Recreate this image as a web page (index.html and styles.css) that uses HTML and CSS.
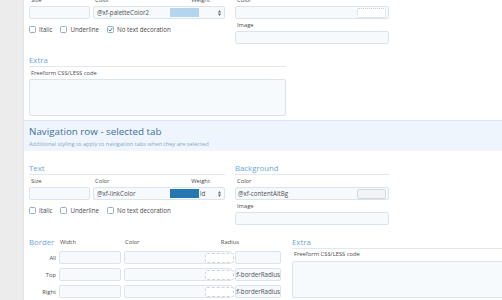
FILE: index.html
```html
<!DOCTYPE html>
<html lang="en">
<head>
    <meta charset="UTF-8">
    <title>Style properties</title>
    <link rel="stylesheet" href="styles.css">
</head>
<body>
<div class="page">
    <div class="side"></div>
    <div class="main">
        <!-- previous property group (scrolled) -->
        <div class="sec pair pair-top">
            <div class="col-text">
                <div class="frow">
                    <div class="f-size"><span class="lbl">Size</span><div class="inp"></div></div>
                    <div class="f-color">
                        <span class="lbl lbl-split"><span>Color</span><span>Weight</span></span>
                        <div class="inp combo">
                            <span class="val">@xf-paletteColor2</span>
                            <span class="swatch sw-light"></span>
                            <span class="sel"><span></span><svg width="3" height="6" viewBox="0 0 3 6"><path d="M0 2.5L1.5 0L3 2.5ZM0 3.5L1.5 6L3 3.5Z" fill="#666"/></svg></span>
                        </div>
                    </div>
                </div>
                <div class="checks">
                    <span class="chk"><span class="box"></span>Italic</span>
                    <span class="chk"><span class="box"></span>Underline</span>
                    <span class="chk"><span class="box on"><svg width="5" height="5" viewBox="0 0 8 8"><path d="M1 4.2L3.2 6.4L7 1.4" fill="none" stroke="#3a7fc2" stroke-width="1.6"/></svg></span>No text decoration</span>
                </div>
            </div>
            <div class="col-bg">
                <span class="lbl">Color</span>
                <div class="inp cbox"><span class="val"></span><span class="swbox dotted"></span></div>
                <span class="lbl lbl-gap">Image</span>
                <div class="inp"></div>
            </div>
        </div>

        <div class="sec extra-top">
            <div class="hdr">Extra</div>
            <span class="lbl lbl-gap">Freeform CSS/LESS code</span>
            <div class="inp area"></div>
        </div>

        <div class="band">
            <div class="band-title">Navigation row - selected tab</div>
            <div class="band-sub">Additional styling to apply to navigation tabs when they are selected</div>
        </div>

        <div class="sec pair pair-text">
            <div class="col-text">
                <div class="hdr">Text</div>
                <div class="frow lbl-gap">
                    <div class="f-size"><span class="lbl">Size</span><div class="inp"></div></div>
                    <div class="f-color">
                        <span class="lbl lbl-split"><span>Color</span><span>Weight</span></span>
                        <div class="inp combo">
                            <span class="val">@xf-linkColor</span>
                            <span class="swatch sw-dark"></span>
                            <span class="sel"><span>ld</span><svg width="3" height="6" viewBox="0 0 3 6"><path d="M0 2.5L1.5 0L3 2.5ZM0 3.5L1.5 6L3 3.5Z" fill="#666"/></svg></span>
                        </div>
                    </div>
                </div>
                <div class="checks">
                    <span class="chk"><span class="box"></span>Italic</span>
                    <span class="chk"><span class="box"></span>Underline</span>
                    <span class="chk"><span class="box"></span>No text decoration</span>
                </div>
            </div>
            <div class="col-bg">
                <div class="hdr">Background</div>
                <span class="lbl lbl-gap">Color</span>
                <div class="inp cbox"><span class="val">@xf-contentAltBg</span><span class="swbox solid"></span></div>
                <span class="lbl lbl-gap">Image</span>
                <div class="inp"></div>
            </div>
        </div>

        <div class="sec pair-border">
            <div class="border-grid">
                <div class="hdr hdr-plain">Border</div>
                <span class="lbl blbl">Width</span>
                <span class="lbl blbl bsplit"><span>Color</span><span>Radius</span></span>

                <span class="rlbl">All</span>
                <div class="inp"></div>
                <div class="inp bcolor"><span class="val"></span><span class="swbox dashed"></span></div>
                <div class="inp"></div>

                <span class="rlbl">Top</span>
                <div class="inp"></div>
                <div class="inp bcolor"><span class="val"></span><span class="swbox dashed"></span></div>
                <div class="inp brad"><span>@xf-borderRadiusSmall</span></div>

                <span class="rlbl">Right</span>
                <div class="inp"></div>
                <div class="inp bcolor"><span class="val"></span><span class="swbox dashed"></span></div>
                <div class="inp brad"><span>@xf-borderRadiusSmall</span></div>
            </div>
            <div class="extra-side">
                <div class="hdr">Extra</div>
                <span class="lbl lbl-tight">Freeform CSS/LESS code</span>
                <div class="inp area area-side"></div>
            </div>
        </div>
    </div>
</div>
</body>
</html>
```

FILE: styles.css
```css
body {margin:0;background:#fff;font-family:"Open Sans","Liberation Sans",sans-serif;color:#444;overflow:hidden;}
.page {display:flex;height:300px;}
.side {width:24px;flex:none;background:#ececec;border-right:1px solid #e2e2e2;box-sizing:border-box;}
.main {flex:1;min-width:0;overflow:hidden;}
.sec {padding-left:5px;}

.pair {display:flex;gap:10px;}
.pair-top {margin-top:-4px;}
.pair-text {margin-top:11px;}
.col-text {width:196px;flex:none;}
.col-bg {width:154px;flex:none;}

.lbl {display:block;height:8px;line-height:8px;font-size:5.8px;color:#4a4a4a;padding-left:2px;margin-bottom:2px;white-space:nowrap;}
.lbl-gap {margin-top:2px;}
.lbl-tight {margin-top:1px;margin-bottom:3px;}
.lbl-split {display:flex;justify-content:space-between;padding-right:15px;}

.hdr {font-size:7.8px;line-height:12px;height:12px;color:#6ea6d7;border-bottom:1px solid #e3e8ee;white-space:nowrap;}
.hdr-plain {border-bottom:none;}

.inp {height:13px;box-sizing:border-box;border:1px solid #dbe4ed;border-radius:2px;background:#f6fafd;font-size:6.2px;color:#4f4f4f;padding:0 3px;display:flex;align-items:center;overflow:hidden;white-space:nowrap;}
.inp .val {flex:1;min-width:0;}

.frow {display:flex;gap:3px;}
.f-size {width:61px;flex:none;}
.f-color {flex:1;}

.combo {padding-right:0;}
.swatch {width:29px;height:9px;flex:none;}
.sw-light {background:#b4d5f0;}
.sw-dark {background:#2577b2;}
.sel {width:25px;flex:none;display:flex;justify-content:space-between;align-items:center;padding:0 3px 0 1px;box-sizing:border-box;}

.checks {display:flex;gap:8px;margin-top:5px;height:10px;align-items:center;font-size:6.2px;color:#4a4a4a;}
.chk {display:flex;align-items:center;gap:3px;}
.box {width:7px;height:7px;box-sizing:border-box;border:1px solid #8db1d2;border-radius:1.5px;background:#fff;display:flex;align-items:center;justify-content:center;}

.cbox {padding:0 2px;}
.swbox {width:29px;height:10px;flex:none;box-sizing:border-box;border-radius:2px;background:#fff;}
.dotted {border:1px dotted #c9cfd5;}
.solid {border:1px solid #d6d9dc;background:#f3f4f5;}
.dashed {border:1px dashed #cfd4d9;}

.extra-top {margin-top:10px;width:257px;}
.area {height:37px;margin-top:2px;}

.band {margin-top:4px;background:#eef5fc;border-top:1px solid #d9e5f1;padding:4px 5px 3px;}
.band-title {font-size:9.8px;line-height:13px;color:#3f6e98;white-space:nowrap;}
.band-sub {font-size:5.7px;line-height:7px;margin-top:3px;color:#86a9ca;white-space:nowrap;}

.pair-border {display:flex;gap:11px;margin-top:11px;}
.border-grid {width:252px;flex:none;display:grid;grid-template-columns:27px 62px 108px 46px;column-gap:3px;row-gap:4px;align-items:center;}
.border-grid .hdr {margin-bottom:-1px;}
.blbl {margin:0;padding-left:1px;}
.bsplit {grid-column:3 / 5;display:flex;justify-content:space-between;padding-right:42px;}
.rlbl {font-size:5.8px;color:#4a4a4a;text-align:right;}
.bcolor {padding-right:0;overflow:visible;}
.bcolor .swbox {margin-right:-3px;height:10px;}
.brad {padding:0;}
.brad span {margin-left:-8px;}

.extra-side {width:230px;flex:none;}
.area-side {margin-top:0;}
```
